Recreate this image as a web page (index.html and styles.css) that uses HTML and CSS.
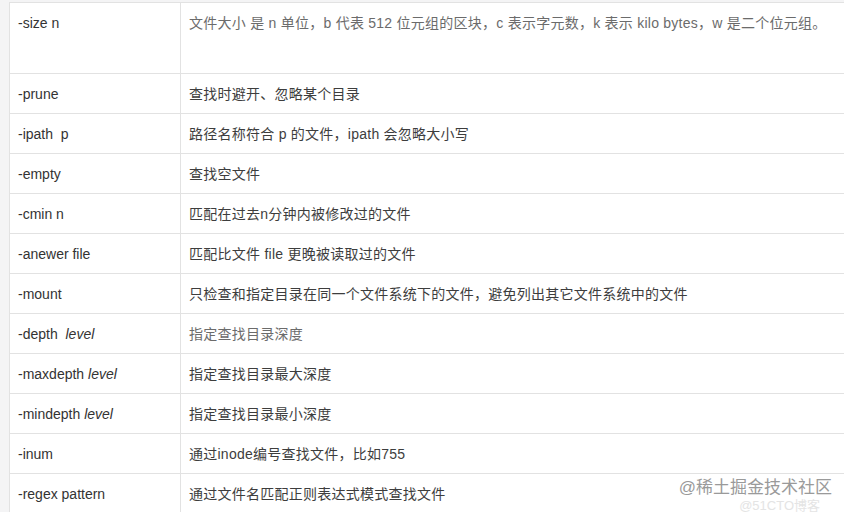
FILE: index.html
```html
<!DOCTYPE html>
<html lang="zh-CN">
<head>
    <meta charset="UTF-8">
    <meta name="viewport" content="width=device-width, initial-scale=1.0">
    <title>find 命令参数</title>
    <link rel="stylesheet" href="styles.css">
</head>
<body>
    <div class="page">
        <table class="options">
            <tr class="tall">
                <td class="opt">-size n</td>
                <td class="desc light">文件大小 是 n 单位，b 代表 512 位元组的区块，c 表示字元数，k 表示 kilo bytes，w 是二个位元组。</td>
            </tr>
            <tr>
                <td class="opt">-prune</td>
                <td class="desc">查找时避开、忽略某个目录</td>
            </tr>
            <tr>
                <td class="opt">-ipath&nbsp; p</td>
                <td class="desc">路径名称符合 p 的文件，ipath 会忽略大小写</td>
            </tr>
            <tr>
                <td class="opt">-empty</td>
                <td class="desc">查找空文件</td>
            </tr>
            <tr>
                <td class="opt">-cmin n</td>
                <td class="desc">匹配在过去n分钟内被修改过的文件</td>
            </tr>
            <tr>
                <td class="opt">-anewer file</td>
                <td class="desc">匹配比文件 file 更晚被读取过的文件</td>
            </tr>
            <tr>
                <td class="opt">-mount</td>
                <td class="desc">只检查和指定目录在同一个文件系统下的文件，避免列出其它文件系统中的文件</td>
            </tr>
            <tr>
                <td class="opt">-depth&nbsp; <em>level</em></td>
                <td class="desc light">指定查找目录深度</td>
            </tr>
            <tr>
                <td class="opt">-maxdepth <em>level</em></td>
                <td class="desc">指定查找目录最大深度</td>
            </tr>
            <tr>
                <td class="opt">-mindepth <em>level</em></td>
                <td class="desc">指定查找目录最小深度</td>
            </tr>
            <tr>
                <td class="opt">-inum</td>
                <td class="desc">通过inode编号查找文件，比如755</td>
            </tr>
            <tr>
                <td class="opt">-regex pattern</td>
                <td class="desc">通过文件名匹配正则表达式模式查找文件</td>
            </tr>
        </table>
        <div class="watermark">@稀土掘金技术社区</div>
        <div class="watermark-faint">@51CTO博客</div>
    </div>
</body>
</html>
```

FILE: styles.css
```css
body {
    margin: 0;
    padding: 0;
    background-color: #f4f4f5;
    font-family: "Liberation Sans", Arial, "Noto Sans CJK SC", sans-serif;
    overflow: hidden;
}
.page {
    position: relative;
    height: 512px;
    padding: 2px 0 0 9px;
    box-sizing: border-box;
    overflow: hidden;
}
.options {
    width: 835px;
    border-collapse: collapse;
    background-color: white;
    font-size: 14px;
}
.options td {
    height: 40px;
    padding: 0 8px;
    border: 1px solid #e2e2e2;
    line-height: 20px;
    color: #333;
    box-sizing: border-box;
}
.options td.desc {
    border-right: none;
}
.options .tall td {
    height: 71px;
    padding-top: 10px;
    vertical-align: top;
}
.opt {
    width: 171px;
}
.options .desc {
    color: #3d3d3d;
    letter-spacing: 0.25px;
}
.options .light {
    color: #6b6b6b;
}
.opt em {
    font-style: italic;
}
.watermark {
    position: absolute;
    right: 12px;
    bottom: 14px;
    font-size: 17px;
    color: #9a9a9a;
    text-shadow: 0 0 2px white, 0 0 2px white;
}
.watermark-faint {
    position: absolute;
    right: 24px;
    bottom: -2px;
    font-size: 13px;
    color: #e4e4e4;
}
```
